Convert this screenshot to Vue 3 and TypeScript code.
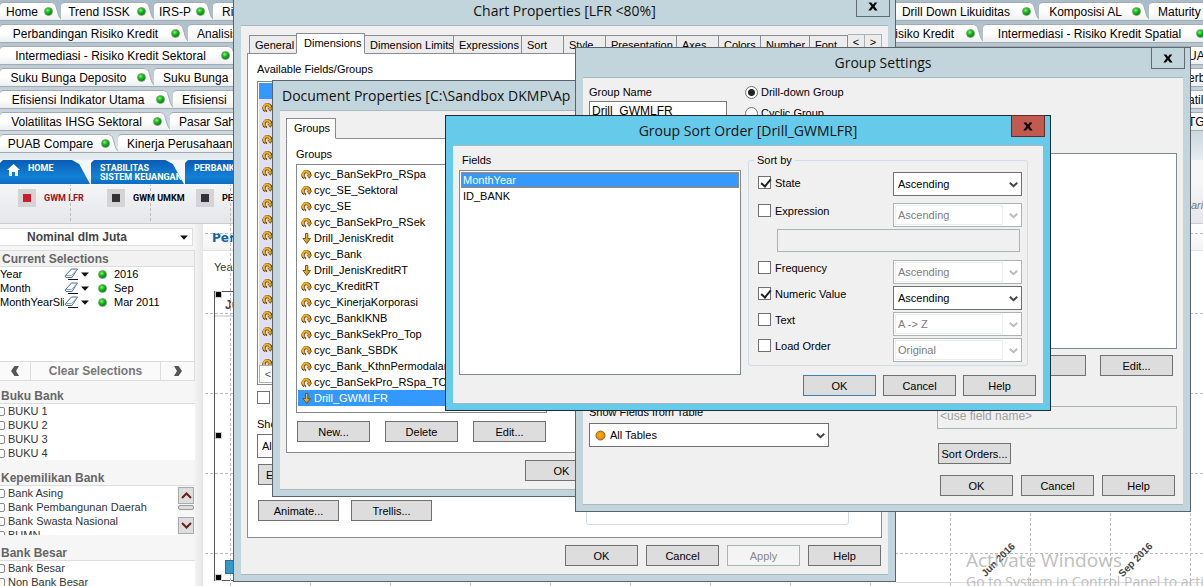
<script setup lang="ts">
import { ref } from 'vue'

interface SheetTab { label: string; width: number; align?: string }
interface PropTab { label: string; width: number }
interface SortRow { label: string; order: string; checked: boolean; expression?: boolean }

const leftTabs: SheetTab[][] = [
  [{ label: 'Home', width: 61 }, { label: 'Trend ISSK', width: 93 }, { label: 'IRS-P', width: 59 }, { label: 'Risiko', width: 80, align: 'start' }],
  [{ label: 'Perbandingan Risiko Kredit', width: 188 }, { label: 'Analisis', width: 100, align: 'start' }],
  [{ label: 'Intermediasi - Risiko Kredit Sektoral', width: 238 }],
  [{ label: 'Suku Bunga Deposito', width: 154 }, { label: 'Suku Bunga', width: 120, align: 'start' }],
  [{ label: 'Efisiensi Indikator Utama', width: 173 }, { label: 'Efisiensi', width: 110, align: 'start' }],
  [{ label: 'Volatilitas IHSG Sektoral', width: 170 }, { label: 'Pasar Saham', width: 110, align: 'start' }],
  [{ label: 'PUAB Compare', width: 118 }, { label: 'Kinerja Perusahaan', width: 160, align: 'start' }],
]
const rightTabs: SheetTab[][] = [
  [{ label: 'Drill Down Likuiditas', width: 169, align: 'end' }, { label: 'Komposisi AL', width: 110 }, { label: 'Maturity', width: 90, align: 'start' }],
  [{ label: 'Risiko Kredit', width: 113, align: 'end' }, { label: 'Intermediasi - Risiko Kredit Spatial', width: 230 }],
  [{ label: 'UA', width: 400, align: 'late' }],
  [{ label: 'erb', width: 400, align: 'late' }],
  [{ label: 'atil', width: 400, align: 'late' }],
  [{ label: 'TG', width: 400, align: 'late' }],
]
const selections = [
  { field: 'Year', value: '2016' },
  { field: 'Month', value: 'Sep' },
  { field: 'MonthYearSli', value: 'Mar 2011' },
]
const bukuBank = ['BUKU 1', 'BUKU 2', 'BUKU 3', 'BUKU 4']
const ownership = ['Bank Asing', 'Bank Pembangunan Daerah', 'Bank Swasta Nasional', 'BUMN']
const bigBanks = ['Bank Besar', 'Non Bank Besar']

const propTabs: PropTab[] = [
  { label: 'General', width: 48 }, { label: 'Dimensions', width: 69 }, { label: 'Dimension Limits', width: 89 },
  { label: 'Expressions', width: 68 }, { label: 'Sort', width: 42 }, { label: 'Style', width: 42 },
  { label: 'Presentation', width: 71 }, { label: 'Axes', width: 42 }, { label: 'Colors', width: 42 },
  { label: 'Number', width: 49 }, { label: 'Font', width: 38 },
]
const groups = [
  'cyc_BanSekPro_RSpa', 'cyc_SE_Sektoral', 'cyc_SE', 'cyc_BanSekPro_RSek', 'Drill_JenisKredit', 'cyc_Bank',
  'Drill_JenisKreditRT', 'cyc_KreditRT', 'cyc_KinerjaKorporasi', 'cyc_BankIKNB', 'cyc_BankSekPro_Top',
  'cyc_Bank_SBDK', 'cyc_Bank_KthnPermodalan', 'cyc_BanSekPro_RSpa_TOP', 'Drill_GWMLFR',
]
const selectedGroup = ref('Drill_GWMLFR')
const fields = ['MonthYear', 'ID_BANK']
const selectedField = ref('MonthYear')
const sortRows = ref<SortRow[]>([
  { label: 'State', order: 'Ascending', checked: true },
  { label: 'Expression', order: 'Ascending', checked: false, expression: true },
  { label: 'Frequency', order: 'Ascending', checked: false },
  { label: 'Numeric Value', order: 'Ascending', checked: true },
  { label: 'Text', order: 'A -> Z', checked: false },
  { label: 'Load Order', order: 'Original', checked: false },
])
const groupName = ref('Drill_GWMLFR')
const groupKind = ref('drill')
</script>

<template>
  <div class="desktop">
    <svg class="defs" aria-hidden="true">
      <defs>
        <linearGradient id="gold" x1="0" y1="0" x2="1" y2="1">
          <stop offset="0" stop-color="#ffe27a" /><stop offset="1" stop-color="#c87a00" />
        </linearGradient>
        <linearGradient id="sheet-fill" x1="0" y1="0" x2="0" y2="1">
          <stop offset="0.5" stop-color="#fff" /><stop offset="1" stop-color="#eceeef" />
        </linearGradient>
        <radialGradient id="green" cx="40%" cy="35%">
          <stop offset="0" stop-color="#7dff6a" /><stop offset="0.6" stop-color="#10c010" /><stop offset="1" stop-color="#0a8a14" />
        </radialGradient>
        <radialGradient id="orange" cx="45%" cy="45%">
          <stop offset="0" stop-color="#ffb000" /><stop offset="1" stop-color="#e88400" />
        </radialGradient>
        <pattern id="grid" width="80" height="80" patternUnits="userSpaceOnUse" x="70" y="73">
          <path d="M0.5 0V80M0 0.5H80" stroke="#bdbdbd" stroke-dasharray="3 2" fill="none" />
        </pattern>
        <symbol id="cycle" viewBox="0 0 11 11">
          <path d="M3.4 8.6A3.3 3.3 0 1 1 8.6 6.4" fill="none" stroke="#4a3410" stroke-width="3.2" />
          <path d="M5.4 5.8H11L8.3 9.8Z" fill="#4a3410" />
          <path d="M3.2 8.2A3.2 3.2 0 1 1 8.2 5.6" fill="none" stroke="#f0b020" stroke-width="2.2" />
          <path d="M5.8 5.6H10.4L8.2 8.8Z" fill="#e8a018" />
          <path d="M3.6 8.2L5 9.6" stroke="#6a4a14" stroke-width="1.6" />
        </symbol>
        <symbol id="drill" viewBox="0 0 11 11">
          <path d="M4.5 0.5H6.8V5.5H9.5L5.8 10.6L2 5.5H4.5Z" fill="url(#gold)" stroke="#6b4a10" stroke-width="0.9" />
        </symbol>
        <symbol id="chevron" viewBox="0 0 9 6">
          <path d="M0.8 0.8L4.5 4.2L8.2 0.8" fill="none" stroke="currentColor" stroke-width="2" />
        </symbol>
        <symbol id="cross" viewBox="0 0 10 9">
          <path d="M0.5 0.5H3.3L5 2.8L6.7 0.5H9.3L6.5 4.3L9.6 8.5H6.8L4.9 5.9L3 8.5H0.3L3.4 4.3Z" fill="#000" />
        </symbol>
        <symbol id="dot" viewBox="0 0 9 9">
          <circle cx="4.5" cy="4.5" r="4" fill="url(#green)" stroke="#8aa08a" stroke-width="0.8" />
        </symbol>
        <symbol id="slope" viewBox="0 0 14 19">
          <path d="M0 0C5 0 5.5 3 7 8C8.5 14 10 18 14 19H0Z" fill="url(#sheet-fill)" />
          <path d="M0 0.5C5 0.5 5.5 3 7 8C8.5 14 10 18 14 18.5H0" fill="none" stroke="#a2abb1" />
        </symbol>
        <symbol id="caret" viewBox="0 0 8 5"><path d="M0 0.5H8L4 4.7Z" fill="#111" /></symbol>
        <symbol id="eraser" viewBox="0 0 15 12">
          <path d="M1 8L7.5 1H13.5L8 9.5H2Z" fill="#fff" stroke="#4c6a9a" />
          <path d="M1.5 7.5H7.5L13 1.5" fill="none" stroke="#88a4cc" />
          <path d="M4 11.5H14" stroke="#111" />
        </symbol>
      </defs>
    </svg>

    <header class="sheets">
      <div class="strip">
        <div v-for="(row, i) in leftTabs" :key="i" class="sheet-row">
          <button v-for="tab in row" :key="tab.label" class="sheet" :class="tab.align" :style="{ width: tab.width + 'px' }">
            <svg class="slope"><use href="#slope" /></svg>
            <span class="sheet-label">{{ tab.label }}</span>
            <svg class="dot"><use href="#dot" /></svg>
          </button>
        </div>
      </div>
      <div class="strip strip-right">
        <div v-for="(row, i) in rightTabs" :key="i" class="sheet-row">
          <button v-for="tab in row" :key="tab.label" class="sheet" :class="tab.align" :style="{ width: tab.width + 'px' }">
            <svg class="slope"><use href="#slope" /></svg>
            <span class="sheet-label">{{ tab.label }}</span>
            <svg class="dot"><use href="#dot" /></svg>
          </button>
        </div>
      </div>
    </header>

    <nav class="nav">
      <a href="#" class="nav-tab nav-home">
        <svg width="13" height="12" viewBox="0 0 13 12"><path d="M6.5 0L13 6H11V12H8V8H5V12H2V6H0Z" fill="#fff" /></svg>
        <span>HOME</span>
      </a>
      <a href="#" class="nav-tab"><span>STABILITAS<br />SISTEM KEUANGAN</span></a>
      <a href="#" class="nav-tab"><span>PERBANKAN</span></a>
    </nav>
    <nav class="subnav">
      <a href="#" class="sub active"><i></i>GWM LFR</a>
      <a href="#" class="sub"><i></i>GWM UMKM</a>
      <a href="#" class="sub"><i></i>PERBANKAN</a>
    </nav>

    <div class="body">
      <aside class="side">
        <button class="measure"><span>Nominal dlm Juta</span><svg width="8" height="5"><use href="#caret" /></svg></button>
        <section class="current">
          <h2>Current Selections</h2>
          <div v-for="s in selections" :key="s.field" class="selection">
            <span class="field">{{ s.field }}</span>
            <svg width="15" height="12"><use href="#eraser" /></svg>
            <svg width="8" height="5"><use href="#caret" /></svg>
            <svg width="9" height="9"><use href="#dot" /></svg>
            <span>{{ s.value }}</span>
          </div>
        </section>
        <div class="clear">
          <button aria-label="Back"><svg width="10" height="10" viewBox="0 0 10 10"><path d="M4.5 0H9L6 5L9 10H4.5L1 5Z" fill="#555" /></svg></button>
          <button>Clear Selections</button>
          <button aria-label="Forward"><svg width="10" height="10" viewBox="0 0 10 10"><path d="M1 0H5.5L9 5L5.5 10H1L4 5Z" fill="#555" /></svg></button>
        </div>
        <section class="listbox">
          <h2>Buku Bank</h2>
          <label v-for="b in bukuBank" :key="b"><input type="checkbox" />{{ b }}</label>
        </section>
        <section class="listbox">
          <h2>Kepemilikan Bank</h2>
          <div class="scroller">
            <div class="scroll-items"><label v-for="b in ownership" :key="b"><input type="checkbox" />{{ b }}</label></div>
            <div class="scrollbar">
              <button aria-label="Scroll up"><svg width="11" height="7" viewBox="0 0 11 7"><path d="M1 6L5.5 1.5L10 6" fill="none" stroke="#6a2020" stroke-width="2" /></svg></button>
              <i></i>
              <button aria-label="Scroll down"><svg width="11" height="7" viewBox="0 0 11 7"><path d="M1 1L5.5 5.5L10 1" fill="none" stroke="#6a2020" stroke-width="2" /></svg></button>
            </div>
          </div>
        </section>
        <section class="listbox">
          <h2>Bank Besar</h2>
          <label v-for="b in bigBanks" :key="b"><input type="checkbox" />{{ b }}</label>
        </section>
      </aside>
      <main class="main">
        <h1>Perbankan</h1>
        <p>Year</p>
        <div class="chart">
          <h3>Juta</h3>
          <b class="handle top"></b><b class="handle mid"></b><b class="handle bottom"></b>
        </div>
      </main>
    </div>

    <svg class="gridlines" aria-hidden="true">
      <rect x="0" y="185" width="100%" height="38" fill="url(#grid)" />
      <rect x="203" y="223" width="100%" height="100%" fill="url(#grid)" />
      <path d="M896 582.5H2400" stroke="#dcdcdc" />
      <rect x="225.5" y="560.5" width="30" height="13" fill="#3399cc" stroke="#2a6f96" />
    </svg>
    <span class="axis june">Jun 2016</span>
    <span class="axis sept">Sep 2016</span>
    <span class="aside-note">ari</span>
    <div class="watermark"><strong>Activate Windows</strong><span>Go to System in Control Panel to activate</span></div>

    <section class="window chart-props" aria-label="Chart Properties">
      <div class="title"><h2>Chart Properties [LFR &lt;80%]</h2><button class="close" aria-label="Close"><svg width="10" height="9"><use href="#cross" /></svg></button></div>
      <div class="client">
        <div class="tabs">
          <button v-for="t in propTabs" :key="t.label" class="tab" :class="{ on: t.label === 'Dimensions' }" :style="{ width: t.width + 'px' }">{{ t.label }}</button>
          <button class="tab arrow">&lt;</button><button class="tab arrow">&gt;</button>
        </div>
        <div class="panel">
          <span class="caption">Available Fields/Groups</span>
          <div class="avail">
            <div class="avail-sel"></div>
            <div class="avail-rows"><svg v-for="n in 17" :key="n" width="11" height="11"><use href="#cycle" /></svg></div>
            <button class="hscroll">&lt;</button>
          </div>
          <label class="check-line"><input type="checkbox" class="check" />Show System Fields</label>
          <label class="caption show-label" for="from">Show Fields from Table</label>
          <span class="combo from"><select id="from"><option>All Tables</option></select></span>
          <button class="btn edit">Edit...</button>
          <div class="wide-row">
            <button class="btn wide">Animate...</button><button class="btn wide">Trellis...</button>
            <div class="settings-box"></div>
          </div>
        </div>
        <div class="footer"><button class="btn">OK</button><button class="btn">Cancel</button><button class="btn" disabled>Apply</button><button class="btn">Help</button></div>
      </div>
    </section>

    <section class="window doc-props" aria-label="Document Properties">
      <div class="title"><h2>Document Properties [C:\Sandbox DKMP\Ap</h2></div>
      <div class="client">
        <div class="tabs"><button class="tab on">Groups</button></div>
        <div class="panel">
          <span class="caption">Groups</span>
          <ul class="list">
            <li v-for="g in groups" :key="g" :class="{ selected: g === selectedGroup }" @click="selectedGroup = g">
              <svg width="11" height="11"><use :href="g.startsWith('Drill') ? '#drill' : '#cycle'" /></svg>{{ g }}
            </li>
          </ul>
          <div class="actions"><button class="btn">New...</button><button class="btn">Delete</button><button class="btn">Edit...</button></div>
        </div>
        <div class="footer"><button class="btn">OK</button></div>
      </div>
    </section>

    <section class="window group-settings" aria-label="Group Settings">
      <div class="title"><h2>Group Settings</h2><button class="close" aria-label="Close"><svg width="10" height="9"><use href="#cross" /></svg></button></div>
      <div class="client">
        <div class="gs-head">
          <div class="gs-name"><label class="caption" for="gname">Group Name</label><input id="gname" v-model="groupName" class="text" /></div>
          <div class="gs-kind">
            <label><input v-model="groupKind" type="radio" name="kind" value="drill" />Drill-down Group</label>
            <label><input v-model="groupKind" type="radio" name="kind" value="cyclic" />Cyclic Group</label>
          </div>
        </div>
        <div class="gs-body">
          <div class="gs-left">
            <label class="caption" for="tables">Show Fields from Table</label>
            <span class="combo with-dot">
              <svg width="11" height="11" class="orange"><circle cx="5.5" cy="5.5" r="4.5" fill="url(#orange)" stroke="#8a6a30" /></svg>
              <select id="tables"><option>All Tables</option></select><svg class="chev"><use href="#chevron" /></svg>
            </span>
          </div>
          <div class="gs-right">
            <div class="used"></div>
            <div class="used-actions"><button class="btn" aria-label="Add"></button><button class="btn">Edit...</button></div>
            <input class="text label-input" disabled placeholder="<use field name>" aria-label="Label" />
            <button class="btn sort-btn">Sort Orders...</button>
          </div>
        </div>
        <div class="footer"><button class="btn">OK</button><button class="btn">Cancel</button><button class="btn">Help</button></div>
      </div>
    </section>

    <section class="window sort-order" aria-label="Group Sort Order">
      <div class="title"><h2>Group Sort Order [Drill_GWMLFR]</h2><button class="close" aria-label="Close"><svg width="10" height="9"><use href="#cross" /></svg></button></div>
      <div class="client">
        <div class="so-body">
          <div class="so-fields">
            <span class="caption">Fields</span>
            <ul class="list">
              <li v-for="f in fields" :key="f" :class="{ selected: f === selectedField }" @click="selectedField = f">{{ f }}</li>
            </ul>
          </div>
          <fieldset>
            <legend>Sort by</legend>
            <template v-for="r in sortRows" :key="r.label">
              <div class="sort-row">
                <label><input v-model="r.checked" type="checkbox" class="check" />{{ r.label }}</label>
                <span class="combo" :class="{ off: !r.checked }">
                  <select :disabled="!r.checked" :aria-label="r.label + ' order'"><option>{{ r.order }}</option></select>
                  <svg class="chev"><use href="#chevron" /></svg>
                </span>
              </div>
              <input v-if="r.expression" class="text expression" disabled aria-label="Sort expression" />
            </template>
          </fieldset>
        </div>
        <div class="footer"><button class="btn default">OK</button><button class="btn">Cancel</button><button class="btn">Help</button></div>
      </div>
    </section>
  </div>
</template>

<style>
body { margin: 0; overflow: hidden; }
</style>

<style scoped>
* { box-sizing: border-box; }
.desktop { position: relative; height: 100vh; overflow: hidden; background: #fff; font: 11px/14px "Liberation Sans", Arial, sans-serif; color: #000; }
button, input, select { font: inherit; color: inherit; margin: 0; }
button { padding: 0; }
h1, h2, h3, p, ul { margin: 0; padding: 0; font-size: inherit; font-weight: inherit; }
a { color: inherit; text-decoration: none; }
svg { flex: none; display: block; }
.defs { position: absolute; width: 0; height: 0; }

.sheets { display: flex; height: 160px; padding-top: 2px; background: linear-gradient(#a9bcc8, #cfdae1 85%, #e8eef2); overflow: hidden; }
.strip { display: flex; flex-direction: column; gap: 3px; flex: 0 0 870px; overflow: hidden; }
.strip-right { flex: 1 0 0; }
.sheet-row { display: flex; height: 19px; flex: none; }
.sheet { position: relative; isolation: isolate; flex: none; display: flex; align-items: center; height: 19px; border: 0; background: none; font-size: 12px; padding-right: 8px; white-space: nowrap; text-align: center; }
.sheet::before { content: ""; position: absolute; z-index: -1; inset: 0 11px 0 0; border: 1px solid #a2abb1; border-width: 1px 0; border-radius: 4px 0 0 0; background: linear-gradient(#fff 50%, #eceeef); }
.sheet-label { flex: 1; }
.sheet.start .sheet-label { text-align: left; padding-left: 9px; }
.sheet.end .sheet-label { text-align: right; padding-right: 12px; }
.sheet.late .sheet-label { text-align: left; padding-left: 318px; }
.dot { width: 9px; height: 9px; }
.slope { position: absolute; z-index: -1; right: -3px; top: 0; width: 14px; height: 19px; }

.nav { display: flex; height: 24px; background: #f4f6f8; gap: 1px; }
.nav-tab { width: 93px; flex: none; background: linear-gradient(#0a5cb4, #1182d6 70%, #0d6cc0); color: #fff; font: bold 9px/9px "Liberation Sans Narrow", "Arial Narrow", Roboto, sans-serif; padding: 4px 0 0 9px; clip-path: polygon(3px 0, 80% 0, 88% 4px, 100% 100%, 0 100%, 0 3px); white-space: nowrap; }
.nav-home { display: flex; gap: 8px; width: 90px; padding-left: 7px; }
.subnav { display: flex; height: 40px; padding-left: 18px; background: linear-gradient(#f4f5f7, #e4e6e9); border-bottom: 1px solid #c9ccd0; }
.sub { display: flex; gap: 8px; width: 89px; height: 18px; margin-top: 5px; align-items: center; font: bold 9px/12px "Liberation Sans Narrow", "Arial Narrow", Roboto, sans-serif; white-space: nowrap; }
.sub i { width: 18px; height: 18px; flex: none; border: 5px solid #d4d4d6; background: #333; }
.sub.active { color: #9c1018; }
.sub.active i { background: #cc1c2c; }

.body { display: flex; height: calc(100vh - 224px); }
.side { width: 203px; flex: none; background: linear-gradient(90deg, #f6f6f6 95%, #e6e6e6); padding: 4px 8px 0 0; overflow: hidden; }
.side h2 { font-weight: bold; font-size: 12px; color: #666; }
.measure { display: flex; width: 193px; height: 18px; align-items: center; justify-content: space-between; padding: 0 4px 0 27px; border: 1px solid #ddd; border-left: 0; background: #fff; color: #444; font-weight: bold; font-size: 12px; }
.current { height: 112px; margin-top: 4px; background: #fff; border: 1px solid #ddd; border-left: 0; }
.current h2 { padding-left: 2px; height: 16px; line-height: 16px; background: #f2f2f2; border-bottom: 1px solid #ddd; }
.selection { display: grid; grid-template-columns: 64px 17px 17px 16px 1fr; align-items: center; height: 14px; }
.field { width: 64px; overflow: hidden; }
.clear { display: flex; height: 19px; background: #fafafa; border-bottom: 1px solid #ddd; }
.clear button { flex: 0 0 31px; display: flex; align-items: center; justify-content: center; border: 0; border-right: 1px solid #ddd; background: none; font-weight: bold; font-size: 12px; color: #777; }
.clear button:nth-child(2) { flex: 1; }
.clear button:last-child { flex-basis: 34px; }
.listbox { margin-bottom: 3px; color: #333; }
.listbox h2 { height: 23px; padding: 8px 0 0 1px; border-bottom: 1px solid #ddd; }
.listbox label { display: flex; align-items: center; height: 14px; gap: 3px; background: #fff; }
.listbox input { appearance: none; width: 9px; height: 9px; margin-left: -4px; border: 1px solid #888; border-radius: 2px; background: #fff; }
.scroller { display: flex; height: 49px; overflow: hidden; background: #fff; }
.scroll-items { flex: 1; }
.scrollbar { width: 18px; padding: 1px; display: flex; flex-direction: column; justify-content: space-between; background: #f6f6f6; }
.scrollbar button { height: 17px; display: grid; place-items: center; border: 1px solid #aaa; background: #ddd; }
.scrollbar i { height: 5px; margin-bottom: 7px; border: 1px solid #999; border-radius: 2px; background: #ddd; }

.main { flex: 1; min-width: 0; background: #fff; }
.main h1 { height: 27px; padding: 7px 0 0 9px; color: #1461a8; font: bold 12px/15px "DejaVu Sans", sans-serif; border-bottom: 1px solid #e2e2e2; background: linear-gradient(#fff, #f4f4f4); }
.main p { padding: 9px 0 0 11px; color: #333; }
.chart { position: relative; margin: 17px 0 0 11px; width: 50%; height: 290px; border: 1px solid #555; }
.chart h3 { height: 25px; padding: 6px 0 0 10px; font-weight: bold; font-size: 12px; color: #444; border-bottom: 2px solid #e0e0e0; }
.handle { position: absolute; left: 0; width: 7px; height: 7px; border: 1px solid #ccc; background: #000; }
.handle.top { top: -1px; }
.handle.mid { top: 140px; }
.handle.bottom { bottom: -1px; }
.gridlines { position: absolute; inset: 0; width: 100%; height: 100%; pointer-events: none; }
.axis { position: absolute; top: 553px; font-weight: bold; font-size: 10px; color: #444; transform: rotate(-45deg); white-space: nowrap; }
.june { left: 977px; }
.sept { left: 1114px; }
.aside-note { position: absolute; left: 1191px; top: 198px; color: #777; font-style: italic; }
.watermark { position: absolute; left: 966px; top: 548px; color: #b4b4b4; font: 14px/20px "Open Sans", sans-serif; white-space: nowrap; opacity: 0.85; }
.watermark strong { display: block; font-weight: normal; font-size: 19px; line-height: 24px; }

.window { position: absolute; display: flex; flex-direction: column; border: 1px solid #5a626b; background: #c3d5dc; padding: 0 7px 7px; }
.title { position: relative; height: 30px; flex: none; display: flex; align-items: center; justify-content: center; }
.title h2 { font: 14px/20px "Open Sans", "Noto Sans", sans-serif; white-space: nowrap; color: #111; }
.close { position: absolute; right: -2px; top: -1px; width: 34px; height: 22px; border: 1px solid #5f6b73; background: transparent; display: grid; place-items: center; }
.client { flex: 1; min-height: 0; display: flex; flex-direction: column; background: #f0f0f0; outline: 1px solid #a8b8c0; clip-path: inset(-1px 0 -1px 0); }
.chart-props { left: 233px; top: -5px; width: 663px; height: 587px; }
.doc-props { left: 272px; top: 80px; width: 420px; height: 417px; }
.group-settings { left: 575px; top: 47px; width: 616px; height: 465px; }
.sort-order { left: 445px; top: 115px; width: 606px; height: 296px; background: #66caeb; border-color: #1f2a33; }
.sort-order .close { background: #c35a50; border-color: #5c2d2f; }

.caption { display: block; height: 14px; white-space: nowrap; }
.btn { flex: none; width: 73px; height: 21px; border: 1px solid #707070; background: #ddd; text-align: center; }
.btn:disabled { border-color: #adb2b5; background: #f4f4f4; color: #888; }
.btn.default { border-color: #3c7fb1; }
.btn.wide { width: 81px; }
.footer { display: flex; justify-content: flex-end; gap: 8px; padding: 7px 1px 8px 0; }
.tabs { display: flex; align-items: flex-end; flex: none; margin-bottom: -1px; position: relative; padding-left: 2px; }
.tab { flex: none; height: 19px; border: 1px solid #898c95; border-left: 0; background: #ececec; text-align: left; padding-left: 5px; white-space: nowrap; overflow: hidden; }
.tab:first-child { border-left: 1px solid #898c95; }
.tab.on { height: 21px; border-bottom-color: #fff; border-left: 1px solid #898c95; background: #fff; margin-left: -1px; padding-bottom: 2px; }
.tab.arrow { width: 17px; height: 20px; padding: 0 0 4px; text-align: center; border-color: #adb2b5; }
.panel { flex: 1; min-height: 0; border: 1px solid #898c95; background: #fff; }
.list { list-style: none; border: 1px solid #828790; background: #fff; padding: 1px; overflow: hidden; }
.list li { height: 16px; line-height: 16px; display: flex; align-items: center; gap: 2px; white-space: nowrap; }
.list .selected { background: #3399ff; color: #fff; }

.chart-props .client { padding: 7px 6px 0; }
.chart-props .panel { padding: 8px 10px 0 9px; display: flex; flex-direction: column; }
.chart-props .tab.on { width: 70px; padding-left: 7px; }
.avail { width: 250px; height: 304px; margin-top: 5px; flex: none; border: 1px solid #828790; padding: 1px; display: flex; flex-direction: column; }
.avail-sel { height: 16px; background: #3399ff; flex: none; }
.avail-rows { flex: 1; overflow: hidden; background: #e0e0f4; display: flex; flex-direction: column; gap: 5px; padding: 3px 0 0 3px; }
.hscroll { height: 18px; width: 18px; border: 1px solid #adb2b5; background: #fff; flex: none; color: #555; }
.check-line { display: flex; align-items: center; gap: 4px; margin-top: 6px; height: 13px; flex: none; }
.show-label { margin-top: 13px; flex: none; }
.from { margin-top: 3px; flex: none; }
.btn.edit { margin: 6px 0 0 1px; text-align: left; padding-left: 7px; }
.wide-row { display: flex; gap: 12px; margin: 15px 0 0 1px; }
.settings-box { width: 263px; height: 25px; margin-left: 142px; border: 1px solid #d0dce5; border-radius: 3px; }

.doc-props .title { justify-content: flex-start; padding-left: 2px; }
.doc-props .client { padding: 7px 6px 0; }
.doc-props .tabs { padding-left: 1px; }
.doc-props .tab { width: 50px; padding-left: 7px; }
.doc-props .panel { padding: 8px 9px 0; }
.doc-props .list { width: 251px; height: 249px; margin-top: 3px; }
.doc-props .list li { padding-left: 3px; gap: 2px; }
.actions { display: flex; gap: 15px; padding: 8px 0 0 1px; }
.doc-props .footer { justify-content: flex-start; padding-left: 239px; }

.combo { position: relative; display: block; width: 129px; height: 24px; }
.combo select { appearance: none; width: 100%; height: 100%; border: 1px solid #707070; border-radius: 0; background: #fff; padding: 0 4px; opacity: 1; }
.chev { position: absolute; right: 4px; top: 10px; width: 9px; height: 6px; color: #444; pointer-events: none; }
.combo.off select { border-color: #adb2b5; color: #7d7d7d; }
.combo.off::after { content: ""; position: absolute; inset: 2px 19px 2px 2px; border: 1px solid #ededed; pointer-events: none; }
.combo.off .chev { color: #bbb; }
.combo.from { width: 250px; }
.combo.with-dot { width: 240px; }
.with-dot select { padding-left: 20px; }
.orange { position: absolute; left: 6px; top: 7px; pointer-events: none; }
.text { display: block; height: 23px; border: 1px solid #7a7a7a; background: #fff; padding: 0 2px; font-size: 12px; }
.text:disabled { border-color: #adb2b5; background: #f0f0f0; }
.text::placeholder { color: #a0a0a0; opacity: 1; }
.gs-name .text { padding-bottom: 3px; }
.label-input { padding-bottom: 4px; }
.check { appearance: none; width: 13px; height: 13px; flex: none; border: 1px solid #707070; background: #fff; }
.check:checked { position: relative; }
.check:checked::after { content: ""; position: absolute; left: 4px; top: 0; width: 4px; height: 8px; border: solid #222; border-width: 0 2px 2px 0; transform: rotate(40deg); }

.group-settings .client { padding: 7px 6px 0; }
.gs-head { display: flex; gap: 18px; }
.gs-name .text { width: 138px; margin-top: 2px; }
.gs-kind label { display: flex; align-items: center; gap: 3px; height: 14px; margin-bottom: 7px; }
.gs-kind input { appearance: none; width: 13px; height: 13px; border: 1px solid #707070; border-radius: 50%; background: #fff; }
.gs-kind input:checked { background: radial-gradient(circle, #222 0 3px, #fff 4px); }
.gs-body { flex: 1; display: flex; justify-content: space-between; }
.gs-left { display: flex; flex-direction: column; padding-top: 278px; }
.gs-left .combo { margin-top: 4px; }
.gs-right { width: 240px; padding-top: 26px; }
.used { height: 196px; border: 1px solid #828790; background: #fff; }
.used-actions { display: flex; justify-content: flex-end; gap: 14px; padding: 6px 4px 0 0; }
.label-input { width: 240px; margin-top: 30px; }
.sort-btn { margin: 14px 0 0 1px; }
.group-settings .footer { padding-right: 2px; }

.sort-order .client { padding: 7px 7px 0 6px; }
.so-body { display: flex; justify-content: space-between; height: 222px; }
.so-fields { width: 282px; }
.so-fields .caption { padding-left: 3px; }
.so-fields .list { height: 205px; margin-top: 3px; }
.so-fields li { padding-left: 2px; }
.so-fields .selected { outline: 1px dotted #d08040; outline-offset: -1px; }
fieldset { width: 280px; height: 213px; margin: 0 8px 0 0; padding: 0 5px 0 9px; border: 1px solid #d0dce5; border-radius: 3px; }
legend { padding: 0 3px; margin-left: -4px; height: 14px; }
.sort-row { display: flex; justify-content: space-between; margin-bottom: 2px; }
.sort-row label { display: flex; gap: 4px; height: 15px; align-items: center; }
.sort-row:first-of-type { margin: 5px 0 7px; }
.sort-row:first-of-type label { height: 21px; }
.expression { width: 243px; margin: 0 0 8px 19px; }
.sort-order .footer { padding: 0; gap: 7px; }
</style>
